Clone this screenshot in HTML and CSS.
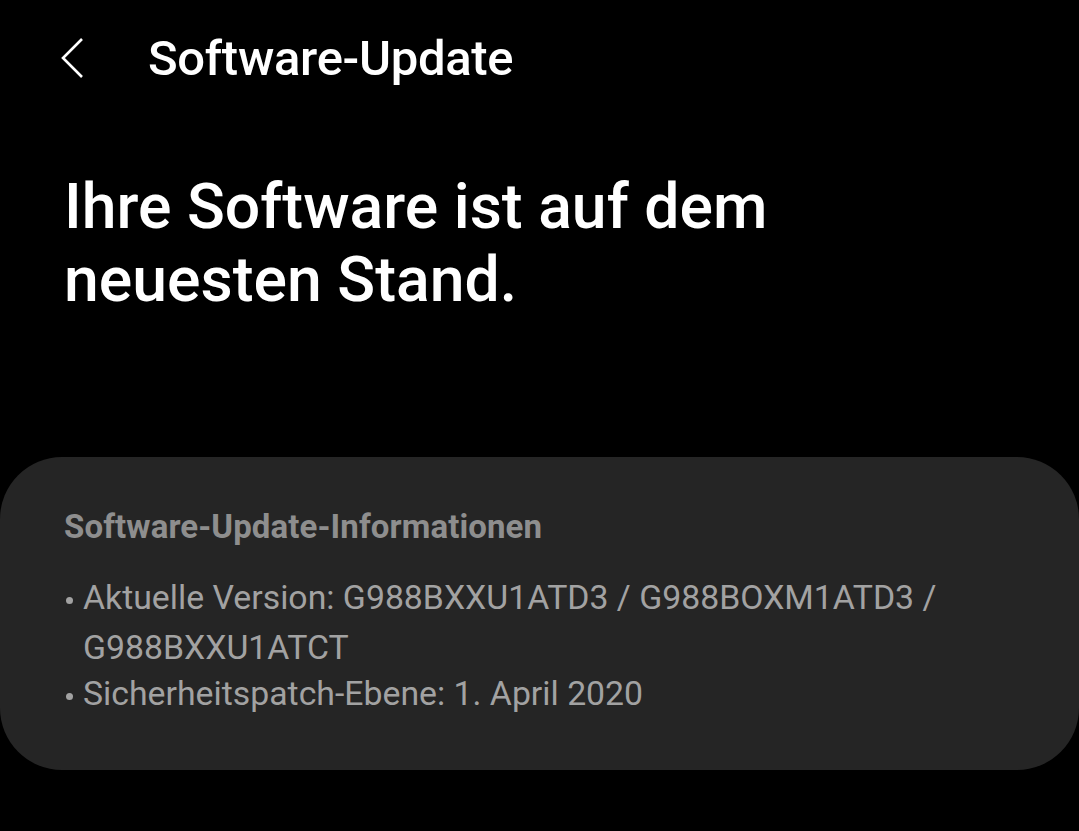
FILE: index.html
```html
<!doctype html>
<html lang="de">

<head>
  <meta charset="UTF-8">
  <title>Software-Update</title>
  <link rel="stylesheet" href="styles.css">
</head>

<body>
  <header class="app-bar">
    <button class="back-button" aria-label="Zurück">
      <svg viewBox="0 0 24 40" width="24" height="40">
        <path d="M22,1 L3,20 L22,39" fill="none" stroke="white" stroke-width="2.6"/>
      </svg>
    </button>
    <h1>Software-Update</h1>
  </header>

  <main>
    <h2 class="status">Ihre Software ist auf dem neuesten Stand.</h2>

    <section class="info-card">
      <h3>Software-Update-Informationen</h3>
      <ul>
        <li>Aktuelle Version: G988BXXU1ATD3 / G988BOXM1ATD3 / G988BXXU1ATCT</li>
        <li>Sicherheitspatch-Ebene: 1. April 2020</li>
      </ul>
    </section>
  </main>
</body>
</html>
```

FILE: styles.css
```css
* {
  box-sizing: border-box;
  padding: 0;
  margin: 0;
}

body {
  background-color: black;
  color: white;
  font-family: Roboto, "Noto Sans", sans-serif;
  width: 1079px;
  height: 831px;
  overflow: hidden;
}

header.app-bar {
  display: flex;
  align-items: center;
  height: 116px;
  padding-left: 60px;
  padding-bottom: 0;
}

  header.app-bar .back-button {
    background: none;
    border: none;
    width: 24px;
    height: 40px;
    margin-right: 64px;
  }

  header.app-bar .back-button svg {
    display: block;
  }

  header.app-bar h1 {
    font-size: 49px;
    font-weight: 500;
    letter-spacing: -0.3px;
  }

main {
  padding-top: 54px;
}

h2.status {
  font-size: 62.5px;
  font-weight: 500;
  line-height: 73px;
  padding: 0 200px 0 64px;
  letter-spacing: 0;
}

section.info-card {
  margin-top: 141px;
  background-color: #252525;
  border-radius: 62px;
  min-height: 313px;
  padding: 48px 130px 0 64px;
  color: #a2a2a2;
}

  section.info-card h3 {
    font-size: 33px;
    font-weight: 700;
    color: #8e8e8e;
    line-height: 44px;
    margin-bottom: 24px;
    letter-spacing: 0.1px;
  }

  section.info-card ul {
    list-style: none;
    font-size: 33.8px;
    line-height: 50px;
  }

  section.info-card li {
    position: relative;
    padding-left: 19px;
  }

  section.info-card li + li {
    margin-top: -4px;
  }

  section.info-card li::before {
    content: "";
    position: absolute;
    left: 2px;
    top: 24px;
    width: 7px;
    height: 7px;
    border-radius: 50%;
    background-color: #a2a2a2;
  }
```
